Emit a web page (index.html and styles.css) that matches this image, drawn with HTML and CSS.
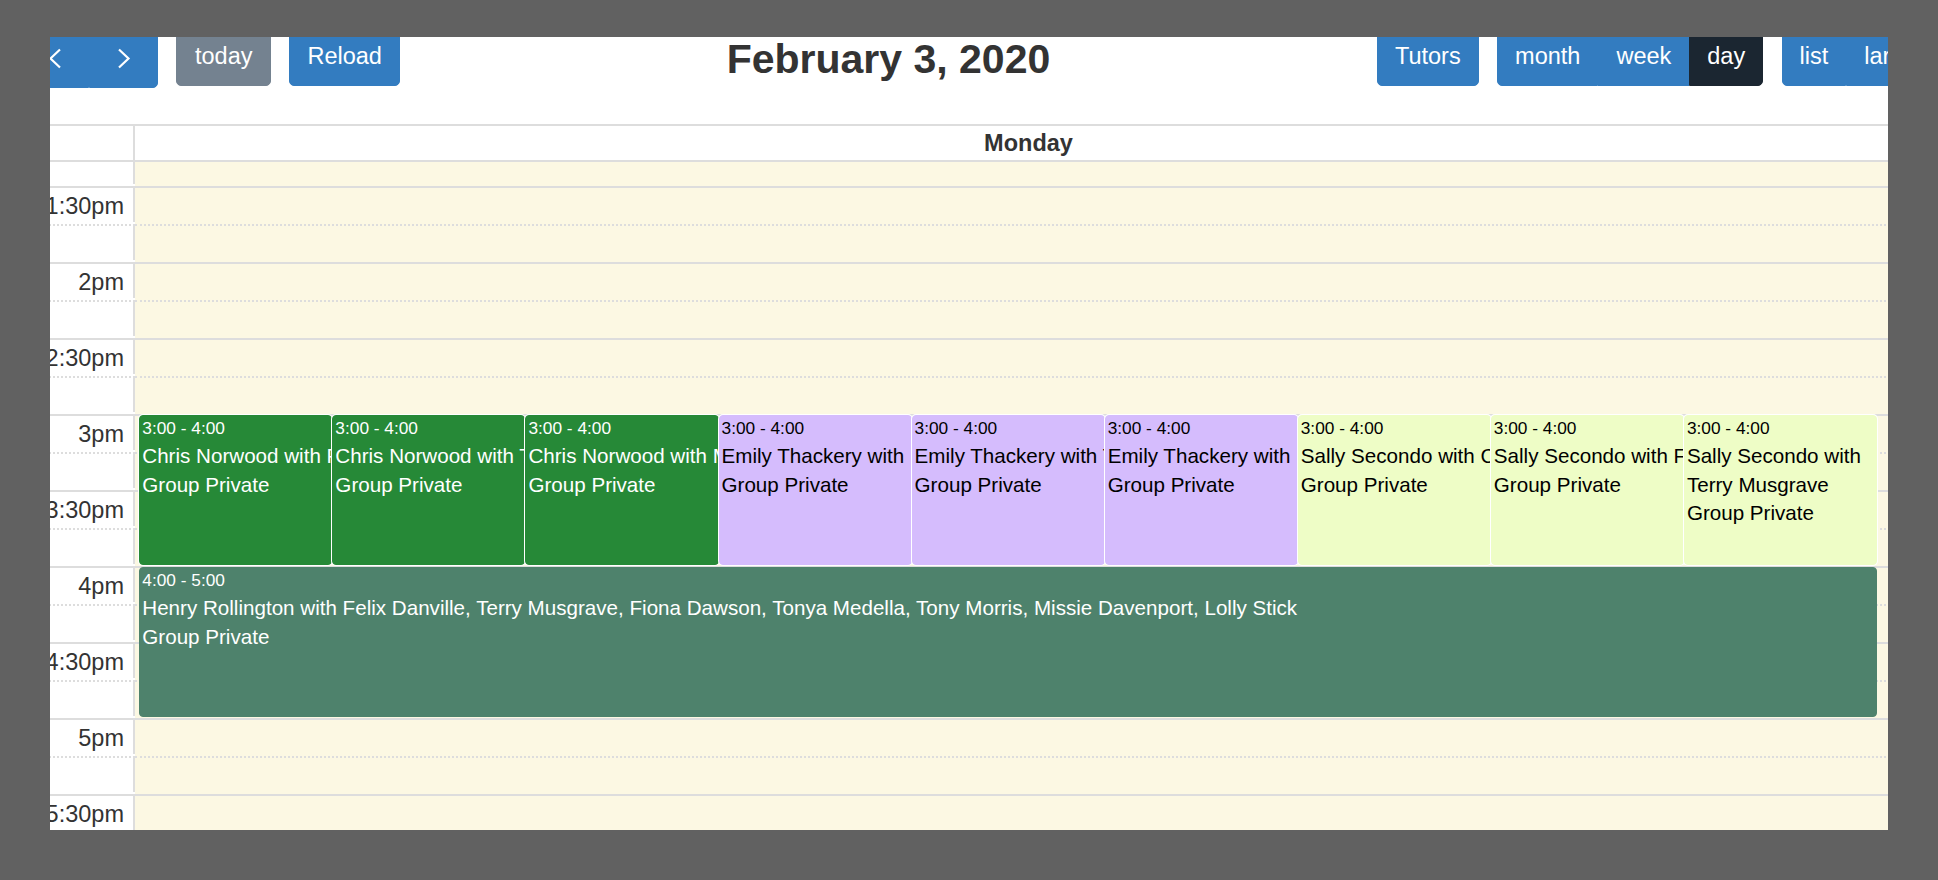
FILE: index.html
```html
<!DOCTYPE html>
<html lang="en">
<head>
    <meta charset="UTF-8">
    <title>Day view</title>
    <link rel="stylesheet" href="styles.css">
</head>
<body>
    <div class="frame">
        <div class="page">
            <div class="toolbar">
                <div class="chunk">
                    <div class="group">
                        <button class="btn btn-icon"><svg width="14" height="21" viewBox="0 0 14 21"><path d="M12 1.5 L2.5 10.5 L12 19.5" fill="none" stroke="#fff" stroke-width="2.2"/></svg></button>
                        <button class="btn btn-icon"><svg width="14" height="21" viewBox="0 0 14 21"><path d="M2 1.5 L11.5 10.5 L2 19.5" fill="none" stroke="#fff" stroke-width="2.2"/></svg></button>
                    </div>
                    <button class="btn btn-today">today</button>
                    <button class="btn">Reload</button>
                </div>
                <div class="title-box">
                    <h2 class="title">February 3, 2020</h2>
                </div>
                <div class="chunk">
                    <button class="btn">Tutors</button>
                    <div class="group">
                        <button class="btn">month</button>
                        <button class="btn">week</button>
                        <button class="btn active">day</button>
                    </div>
                    <div class="group">
                        <button class="btn">list</button>
                        <button class="btn">large</button>
                    </div>
                </div>
            </div>

            <div class="cal">
                <div class="head">
                    <div class="axis-cell"></div>
                    <div class="day-head">Monday</div>
                </div>

                <div class="slots">
                    <div class="slot minor first"><div class="axis-cell"></div><div class="day-cell"></div></div>
                    <div class="slot"><div class="axis-cell">1:30pm</div><div class="day-cell"></div></div>
                    <div class="slot minor"><div class="axis-cell"></div><div class="day-cell"></div></div>
                    <div class="slot"><div class="axis-cell">2pm</div><div class="day-cell"></div></div>
                    <div class="slot minor"><div class="axis-cell"></div><div class="day-cell"></div></div>
                    <div class="slot"><div class="axis-cell">2:30pm</div><div class="day-cell"></div></div>
                    <div class="slot minor"><div class="axis-cell"></div><div class="day-cell"></div></div>
                    <div class="slot"><div class="axis-cell">3pm</div><div class="day-cell"></div></div>
                    <div class="slot minor"><div class="axis-cell"></div><div class="day-cell"></div></div>
                    <div class="slot"><div class="axis-cell">3:30pm</div><div class="day-cell"></div></div>
                    <div class="slot minor"><div class="axis-cell"></div><div class="day-cell"></div></div>
                    <div class="slot"><div class="axis-cell">4pm</div><div class="day-cell"></div></div>
                    <div class="slot minor"><div class="axis-cell"></div><div class="day-cell"></div></div>
                    <div class="slot"><div class="axis-cell">4:30pm</div><div class="day-cell"></div></div>
                    <div class="slot minor"><div class="axis-cell"></div><div class="day-cell"></div></div>
                    <div class="slot"><div class="axis-cell">5pm</div><div class="day-cell"></div></div>
                    <div class="slot minor"><div class="axis-cell"></div><div class="day-cell"></div></div>
                    <div class="slot"><div class="axis-cell">5:30pm</div><div class="day-cell"></div></div>
                    <div class="slot minor"><div class="axis-cell"></div><div class="day-cell"></div></div>

                    <!-- events -->
                    <div class="events">
                        <div class="event inset ev-green" style="top:253px;height:150px;left:0%;width:11.1111%">
                            <div class="time">3:00 - 4:00</div>
                            <div>Chris Norwood with Felix Danville</div>
                            <div>Group Private</div>
                        </div>
                        <div class="event inset ev-green" style="top:253px;height:150px;left:11.1111%;width:11.1111%">
                            <div class="time">3:00 - 4:00</div>
                            <div>Chris Norwood with Tonya Medella</div>
                            <div>Group Private</div>
                        </div>
                        <div class="event inset ev-green" style="top:253px;height:150px;left:22.2222%;width:11.1111%">
                            <div class="time">3:00 - 4:00</div>
                            <div>Chris Norwood with Missie Davenport</div>
                            <div>Group Private</div>
                        </div>
                        <div class="event inset ev-lilac" style="top:253px;height:150px;left:33.3333%;width:11.1111%">
                            <div class="time">3:00 - 4:00</div>
                            <div>Emily Thackery with Fiona Dawson</div>
                            <div>Group Private</div>
                        </div>
                        <div class="event inset ev-lilac" style="top:253px;height:150px;left:44.4444%;width:11.1111%">
                            <div class="time">3:00 - 4:00</div>
                            <div>Emily Thackery with Tony Morris</div>
                            <div>Group Private</div>
                        </div>
                        <div class="event inset ev-lilac" style="top:253px;height:150px;left:55.5555%;width:11.1111%">
                            <div class="time">3:00 - 4:00</div>
                            <div>Emily Thackery with Lolly Stick</div>
                            <div>Group Private</div>
                        </div>
                        <div class="event inset ev-lime" style="top:253px;height:150px;left:66.6666%;width:11.1111%">
                            <div class="time">3:00 - 4:00</div>
                            <div>Sally Secondo with Chris Norwood</div>
                            <div>Group Private</div>
                        </div>
                        <div class="event inset ev-lime" style="top:253px;height:150px;left:77.7777%;width:11.1111%">
                            <div class="time">3:00 - 4:00</div>
                            <div>Sally Secondo with Felix Danville</div>
                            <div>Group Private</div>
                        </div>
                        <div class="event inset ev-lime" style="top:253px;height:150px;left:88.8888%;width:11.1112%">
                            <div class="time">3:00 - 4:00</div>
                            <div>Sally Secondo with</div>
                            <div>Terry Musgrave</div>
                            <div>Group Private</div>
                        </div>
                        <div class="event ev-teal" style="top:405px;height:150px;left:0%;width:100%">
                            <div class="time">4:00 - 5:00</div>
                            <div>Henry Rollington with Felix Danville, Terry Musgrave, Fiona Dawson, Tonya Medella, Tony Morris, Missie Davenport, Lolly Stick</div>
                            <div>Group Private</div>
                        </div>
                    </div>
                </div>
            </div>
        </div>
    </div>
</body>
</html>
```

FILE: styles.css
```css
body {
    margin: 0;
    background: #616161;
    font-family: "Liberation Sans", Arial, Helvetica, sans-serif;
    color: #333;
}

.frame {
    margin: 37px 0 0 50px;
    width: 1838px;
    height: 793px;
    overflow: hidden;
    background: #fff;
}

.page {
    margin: -6px 0 0 -30px;
    width: 1960px;
}

/* toolbar */
.toolbar {
    display: flex;
    align-items: flex-start;
    margin-bottom: 36.4px;
}

.chunk {
    display: flex;
    align-items: flex-start;
    gap: 18.4px;
    flex: 0 0 auto;
}

.title-box {
    flex: 0 0 977px;
    align-self: center;
    text-align: center;
}

.title {
    margin: 0;
    font-size: 41px;
    font-weight: bold;
    line-height: 1.2;
    color: #333;
}

.btn {
    font-family: inherit;
    font-size: 23.5px;
    line-height: 1.5;
    padding: 6.8px 17px 10.8px;
    border: 1px solid #337cc0;
    background: #337cc0;
    color: #fff;
    border-radius: 5px;
    white-space: nowrap;
}

.btn-today {
    background: #748290;
    border-color: #748290;
    padding-left: 17.6px;
    padding-right: 17.6px;
}

.btn.active {
    background: #1b2631;
    border-color: #1b2631;
}

.group {
    display: flex;
}

.group .btn {
    border-radius: 0;
}

.group .btn:first-child {
    border-radius: 5px 0 0 5px;
}

.group .btn:last-child {
    border-radius: 0 5px 5px 0;
}

.btn-icon {
    width: 69px;
    height: 56.6px;
    padding: 0 0 2px;
    display: flex;
    align-items: center;
    justify-content: center;
}

/* grid */
.cal {
    width: 1904px;
}

.head {
    display: flex;
    border-top: 2px solid #ddd;
    border-bottom: 2px solid #ddd;
}

.axis-cell {
    box-sizing: border-box;
    flex: 0 0 115px;
    border-right: 2px solid #ddd;
    padding-right: 9px;
    text-align: right;
    font-size: 23.5px;
    background: #fff;
    white-space: nowrap;
}

.day-head {
    flex: 0 0 1787px;
    text-align: center;
    font-size: 23.5px;
    font-weight: bold;
    line-height: 34px;
    height: 34px;
    color: #333;
}

.slots {
    position: relative;
    height: 668px;
    overflow: hidden;
}

.slot {
    display: flex;
}

.slot.first {
    margin-top: -14px;
}

.slot > div {
    height: 36px;
    line-height: 36px;
    border-top: 2px solid #ddd;
}

.slot.minor > div {
    border-top-style: dotted;
}

.day-cell {
    flex: 0 0 1787px;
    background: #fcf8e3;
}

/* events */
.events {
    position: absolute;
    top: 0;
    left: 119.3px;
    width: 1737.7px;
    height: 100%;
}

.event {
    position: absolute;
    box-sizing: border-box;
    border: 1px solid;
    border-radius: 4px;
    overflow: hidden;
    padding: 0 2px;
    font-size: 20.6px;
    line-height: 1.39;
    white-space: nowrap;
}

.event.inset {
    box-shadow: 0 0 0 1px #fff;
}

.event .time {
    font-size: 17.3px;
    line-height: 1.5;
}

.ev-green {
    background: #268937;
    border-color: #268937;
    color: #fff;
}

.ev-lilac {
    background: #d5bcfd;
    border-color: #d5bcfd;
    color: #000;
}

.ev-lime {
    background: #eefdc6;
    border-color: #eefdc6;
    color: #000;
}

.ev-teal {
    background: #4e826c;
    border-color: #4e826c;
    color: #fff;
}
```
